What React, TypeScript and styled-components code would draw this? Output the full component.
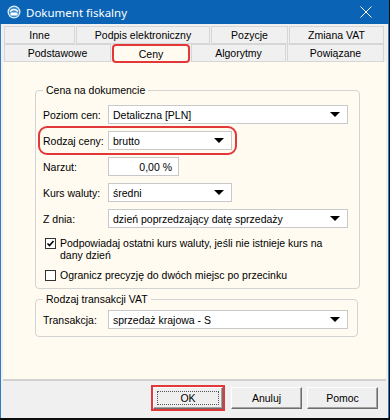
import React from 'react';
import styled, { createGlobalStyle } from 'styled-components';

const GlobalStyle = createGlobalStyle`
  html, body {
    margin: 0;
    padding: 0;
    background: #0c0c0c;
  }
  body {
    font-family: "Liberation Sans", Arial, sans-serif;
    font-size: 10.5px;
    color: #000;
  }
`;

const Frame = styled.div`
  width: 390px;
  height: 420px;
  overflow: hidden;
  background: #0c0c0c;
`;

const Window = styled.div`
  box-sizing: border-box;
  width: 389px;
  height: 418px;
  border-left: 1px solid #2f7bc6;
  border-right: 1px solid #2f7bc6;
  background: #f0f0f0;
  display: flex;
  flex-direction: column;
`;

const TitleBar = styled.div`
  height: 24px;
  margin: 0 -1px;
  background: #0a63b4;
  display: flex;
  align-items: center;
  padding: 0 0 0 7px;
  color: #fff;
`;

const TitleText = styled.span`
  font-family: "Noto Sans", "Open Sans", sans-serif;
  font-size: 11.5px;
  margin-left: 5px;
  flex: 1;
`;

const CloseButton = styled.div`
  width: 46px;
  height: 24px;
  display: flex;
  align-items: center;
  justify-content: center;
`;

const TabArea = styled.div`
  padding: 2px 3px 0 3px;
  display: flex;
  flex-direction: column;
`;

const TabRow = styled.div`
  display: flex;
  gap: 1px;
  height: 18px;
`;

const Tab = styled.div<{ $w: number; $active?: boolean }>`
  box-sizing: border-box;
  width: ${p => p.$w}px;
  height: ${p => (p.$active ? 19 : 18)}px;
  display: flex;
  align-items: center;
  justify-content: center;
  background: ${p => (p.$active ? '#fffbf0' : '#f0f0f0')};
  border: ${p => (p.$active ? '2px solid #e2383a' : '1px solid #d6d6d6')};
  border-radius: ${p => (p.$active ? '4px' : '0')};
  position: relative;
  z-index: ${p => (p.$active ? 2 : 0)};
  white-space: nowrap;
`;

const Panel = styled.div`
  flex: 1;
  margin: 0 2px;
  background: #fffbf0;
  border-bottom: 2px solid #d0d0d0;
  padding: 22px 0 0 32px;
  display: flex;
  flex-direction: column;
  gap: 4px;
`;

const Group = styled.fieldset<{ $w: number; $top: number }>`
  box-sizing: border-box;
  width: ${p => p.$w}px;
  margin: 0;
  border: 1px solid #d3d3d3;
  border-radius: 4px;
  padding: ${p => p.$top}px 7px 7px 7px;
  display: flex;
  flex-direction: column;
`;

const Legend = styled.legend`
  padding: 0 3px;
  line-height: 13px;
`;

const Rows = styled.div`
  display: flex;
  flex-direction: column;
  gap: 7px;
`;

const Row = styled.div<{ $highlight?: boolean }>`
  display: flex;
  align-items: center;
  height: 19px;
  align-self: flex-start;
  border-radius: 4px;
  outline: ${p => (p.$highlight ? '2px solid #e2383a' : 'none')};
  outline-offset: 3px;
`;

const Label = styled.span`
  width: 65px;
  white-space: nowrap;
`;

const SelectBox = styled.div<{ $w: number }>`
  box-sizing: border-box;
  width: ${p => p.$w}px;
  height: 19px;
  background: #fff;
  border: 1px solid #c9c9c9;
  display: flex;
  align-items: center;
  padding: 0 7px 0 4px;
`;

const SelectText = styled.span`
  flex: 1;
  white-space: nowrap;
`;

const Arrow = styled.span`
  width: 0;
  height: 0;
  border-left: 5px solid transparent;
  border-right: 5px solid transparent;
  border-top: 5px solid #000;
`;

const NumberBox = styled.div`
  box-sizing: border-box;
  width: 71px;
  height: 19px;
  background: #fff;
  border: 1px solid #c9c9c9;
  display: flex;
  align-items: center;
  justify-content: flex-end;
  padding: 0 6px;
`;

const CheckRow = styled.div<{ $mt: number }>`
  display: flex;
  align-items: flex-start;
  margin-top: ${p => p.$mt}px;
  padding-left: 2px;
  line-height: 12px;
`;

const Box = styled.span`
  box-sizing: border-box;
  flex: none;
  width: 11px;
  height: 11px;
  margin: 1px 4px 0 0;
  border: 1px solid #333;
  background: #fff;
  display: flex;
  align-items: center;
  justify-content: center;
`;

const Footer = styled.div`
  height: 31px;
  display: flex;
  justify-content: flex-end;
  align-items: flex-start;
  padding: 6px 10px 0 0;
`;

const Button = styled.div<{ $w: number; $mr: number; $default?: boolean }>`
  box-sizing: border-box;
  width: ${p => p.$w}px;
  height: 22px;
  margin-right: ${p => p.$mr}px;
  background: #efefef;
  border: 1px solid;
  border-color: #fdfdfd #6d6d6d #6d6d6d #fdfdfd;
  box-shadow: inset -1px -1px 0 #a3a3a3;
  display: flex;
  align-items: center;
  justify-content: center;
  outline: ${p => (p.$default ? '2px solid #e2383a' : 'none')};
  outline-offset: 0;
`;

const Focus = styled.span`
  box-sizing: border-box;
  width: calc(100% - 6px);
  height: calc(100% - 6px);
  border: 1px dotted #555;
  display: flex;
  align-items: center;
  justify-content: center;
`;

const AppIcon = () => (
  <svg width="14" height="14" viewBox="0 0 14 14">
    <circle cx="7" cy="7" r="6.5" fill="#dfeefa" />
    <circle cx="7" cy="7" r="5.2" fill="#3f8fd0" />
    <path d="M3 6.5 Q7 2.5 11 6.5" stroke="#fff" strokeWidth="1.3" fill="none" />
    <rect x="3.5" y="7.5" width="7" height="3" rx="0.5" fill="#fff" />
  </svg>
);

const CloseIcon = () => (
  <svg width="12" height="12" viewBox="0 0 12 12">
    <path d="M0.5 0.5 L11.5 11.5 M11.5 0.5 L0.5 11.5" stroke="#fff" strokeWidth="1" />
  </svg>
);

const Check = () => (
  <svg width="9" height="9" viewBox="0 0 9 9">
    <path d="M1.5 4.5 L3.5 6.5 L7.5 2" stroke="#000" strokeWidth="1.6" fill="none" />
  </svg>
);

const Select = ({ w, value }: { w: number; value: string }) => (
  <SelectBox $w={w}>
    <SelectText>{value}</SelectText>
    <Arrow />
  </SelectBox>
);

const topTabs: [string, number][] = [
  ['Inne', 71],
  ['Podpis elektroniczny', 134],
  ['Pozycje', 77],
  ['Zmiana VAT', 95],
];

const bottomTabs: [string, number][] = [
  ['Podstawowe', 107],
  ['Ceny', 78],
  ['Algorytmy', 95],
  ['Powiązane', 97],
];

export default function App() {
  return (
    <Frame>
      <GlobalStyle />
      <Window>
        <TitleBar>
          <AppIcon />
          <TitleText>Dokument fiskalny</TitleText>
          <CloseButton>
            <CloseIcon />
          </CloseButton>
        </TitleBar>
        <TabArea>
          <TabRow>
            {topTabs.map(([t, w]) => (
              <Tab key={t} $w={w}>{t}</Tab>
            ))}
          </TabRow>
          <TabRow>
            {bottomTabs.map(([t, w]) => (
              <Tab key={t} $w={w} $active={t === 'Ceny'}>{t}</Tab>
            ))}
          </TabRow>
        </TabArea>
        <Panel>
          <Group $w={325} $top={8}>
            <Legend>Cena na dokumencie</Legend>
            <Rows>
              <Row>
                <Label>Poziom cen:</Label>
                <Select w={240} value="Detaliczna [PLN]" />
              </Row>
              <Row $highlight>
                <Label>Rodzaj ceny:</Label>
                <Select w={124} value="brutto" />
              </Row>
              <Row>
                <Label>Narzut:</Label>
                <NumberBox>0,00 %</NumberBox>
              </Row>
              <Row>
                <Label>Kurs waluty:</Label>
                <Select w={124} value="średni" />
              </Row>
              <Row>
                <Label>Z dnia:</Label>
                <Select w={240} value="dzień poprzedzający datę sprzedaży" />
              </Row>
            </Rows>
            <CheckRow $mt={9}>
              <Box>
                <Check />
              </Box>
              <span>
                Podpowiadaj ostatni kurs waluty, jeśli nie istnieje kurs na
                <br />
                dany dzień
              </span>
            </CheckRow>
            <CheckRow $mt={8}>
              <Box />
              <span>Ogranicz precyzję do dwóch miejsc po przecinku</span>
            </CheckRow>
          </Group>
          <Group $w={323} $top={4}>
            <Legend>Rodzaj transakcji VAT</Legend>
            <Row>
              <Label>Transakcja:</Label>
              <Select w={240} value="sprzedaż krajowa - S" />
            </Row>
          </Group>
        </Panel>
        <Footer>
          <Button $w={70} $mr={8} $default>
            <Focus>OK</Focus>
          </Button>
          <Button $w={71} $mr={5}>Anuluj</Button>
          <Button $w={71} $mr={0}>Pomoc</Button>
        </Footer>
      </Window>
    </Frame>
  );
}
